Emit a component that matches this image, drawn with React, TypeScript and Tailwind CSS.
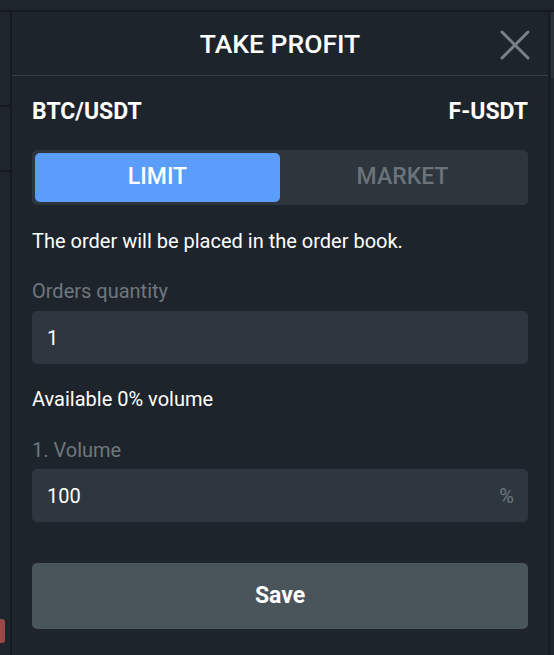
import { useState } from "react";

const FONT = { fontFamily: "Roboto, 'Noto Sans', sans-serif" };

function CloseIcon() {
  return (
    <svg width="30" height="30" viewBox="0 0 30 30" fill="none">
      <path d="M2 2L28 28M28 2L2 28" stroke="#7a8188" strokeWidth="3" strokeLinecap="round" />
    </svg>
  );
}

export default function App() {
  const [mode, setMode] = useState<"limit" | "market">("limit");

  return (
    <div
      className="flex h-[655px] w-[554px] flex-col overflow-hidden bg-[#1e252c] text-white"
      style={FONT}
    >
      <div className="h-[10px] shrink-0 border-b-2 border-[#141a1f] box-content" />

      <div className="flex min-h-0 flex-1">
        {/* page behind the modal */}
        <div className="relative w-[10px] shrink-0 border-r-2 border-[#141a1f] box-content">
          <div className="mt-[93px] h-[2px] bg-[#141a1f]" />
          <div className="mt-[63px] h-[2px] bg-[#141a1f]" />
          <div className="absolute left-0 top-[607px] h-[24px] w-[5px] rounded-r-[3px] bg-[#9c4848]" />
        </div>

        {/* modal */}
        <div className="flex w-[536px] shrink-0 flex-col bg-[#1e242b]">
          <header className="relative flex h-[64px] shrink-0 items-center justify-center border-b border-[#353d45]">
            <h2 className="text-[26.5px] font-medium leading-8">TAKE PROFIT</h2>
            <button type="button" className="absolute right-[18px] top-[18px]">
              <CloseIcon />
            </button>
          </header>

          <div className="flex flex-col px-5">
            <div className="mt-[24px] flex items-center justify-between text-[23px] font-bold leading-6">
              <span>BTC/USDT</span>
              <span>F-USDT</span>
            </div>

            <div className="mt-[26px] flex h-[55px] rounded-[5px] bg-[#2d353d] p-[3px]">
              <button
                type="button"
                onClick={() => setMode("limit")}
                className={`flex-1 rounded-[5px] text-[23px] font-medium ${
                  mode === "limit" ? "bg-[#5b9dfb] text-white" : "text-[#6a727a]"
                }`}
              >
                LIMIT
              </button>
              <button
                type="button"
                onClick={() => setMode("market")}
                className={`flex-1 rounded-[5px] text-[23px] font-medium ${
                  mode === "market" ? "bg-[#5b9dfb] text-white" : "text-[#6a727a]"
                }`}
              >
                MARKET
              </button>
            </div>

            <p className="mt-[24px] text-[20px] leading-6">The order will be placed in the order book.</p>

            <label className="mt-[26px] text-[20px] leading-6 text-[#6f777f]">Orders quantity</label>
            <div className="mt-[8px] flex h-[53px] items-center rounded-[5px] bg-[#2e363f] px-[15px] text-[20px]">
              1
            </div>

            <p className="mt-[23px] text-[20px] leading-6">Available 0% volume</p>

            <label className="mt-[27px] text-[20px] leading-6 text-[#6f777f]">1. Volume</label>
            <div className="mt-[7px] flex h-[53px] items-center justify-between rounded-[5px] bg-[#2e363f] pl-[15px] pr-[14px] text-[20px]">
              <span>100</span>
              <span className="text-[#6f777f]">%</span>
            </div>

            <button
              type="button"
              className="mt-[41px] h-[66px] rounded-[5px] bg-[#49545b] text-[23px] font-bold"
            >
              Save
            </button>
          </div>
        </div>

        {/* right edge of the page */}
        <div className="flex flex-1 border-l-2 border-[#161c22]">
          <div className="ml-[1px] h-[66px] w-full bg-[#2a3139]" />
        </div>
      </div>
    </div>
  );
}
